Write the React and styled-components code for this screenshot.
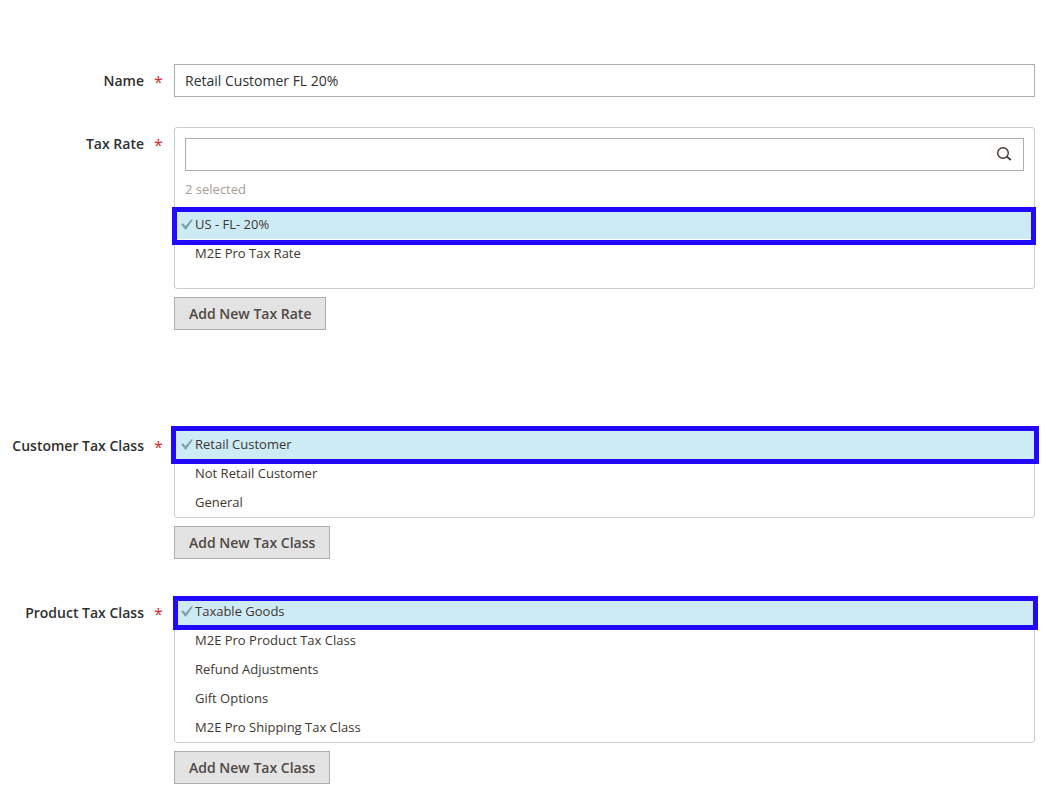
import React, { useState } from "react";
import styled, { createGlobalStyle } from "styled-components";

const GlobalStyle = createGlobalStyle`
  *, *::before, *::after {
    box-sizing: border-box;
  }

  body {
    margin: 0;
    background: #fff;
    color: #303030;
    font-family: "Open Sans", "Noto Sans", sans-serif;
    font-size: 14px;
  }
`;

const customerClasses = ["Retail Customer", "Not Retail Customer", "General"];

const productClasses = [
  "Taxable Goods",
  "M2E Pro Product Tax Class",
  "Refund Adjustments",
  "Gift Options",
  "M2E Pro Shipping Tax Class",
];

const taxRates = ["US - FL- 20%", "M2E Pro Tax Rate"];

const SearchIcon = () => (
  <svg width="16" height="16" viewBox="0 0 16 16" fill="none" stroke="#41362f" aria-hidden="true">
    <circle cx="7" cy="7" r="5.3" strokeWidth="1.4" />
    <path d="M10.8 10.6 L14.8 14" strokeWidth="1.9" />
  </svg>
);

const CheckIcon = () => (
  <svg width="12" height="12" viewBox="0 0 12 12" fill="#7fa4b0" aria-hidden="true">
    <path d="M0.2 5.6 L2.1 4.3 L4.4 7 L10.4 0.2 L11.9 0.8 L5.2 10.4 L4 10.4 Z" />
  </svg>
);

// the blue frame goes round the option at index 0
const OptionList = ({ name, options, frame }) => {
  const [selected, setSelected] = useState([options[0]]);

  const toggle = (option) => {
    setSelected((prev) =>
      prev.includes(option) ? prev.filter((o) => o !== option) : [...prev, option]
    );
  };

  return (
    <List>
      {options.map((option, index) => {
        const checked = selected.includes(option);
        return (
          <Option key={option} $checked={checked}>
            <label>
              <input
                type="checkbox"
                name={name}
                checked={checked}
                onChange={() => toggle(option)}
              />
              <Mark>{checked && <CheckIcon />}</Mark>
              {option}
            </label>
            {index === 0 && <Frame $inset={frame} />}
          </Option>
        );
      })}
    </List>
  );
};

const App = () => {
  const [name, setName] = useState("Retail Customer FL 20%");
  const [search, setSearch] = useState("");

  return (
    <>
      <GlobalStyle />
      <Form onSubmit={(e) => e.preventDefault()}>
        <Field $space={30}>
          <Label as="label" htmlFor="rule-name">
            Name<Required>*</Required>
          </Label>
          <TextInput
            id="rule-name"
            type="text"
            required
            value={name}
            onChange={(e) => setName(e.target.value)}
          />
        </Field>

        <Field $space={99} role="group" aria-labelledby="tax-rate">
          <Label id="tax-rate">
            Tax Rate<Required>*</Required>
          </Label>
          <Control>
            <Panel $tall>
              <SearchBox>
                <TextInput
                  type="text"
                  aria-label="Search tax rates"
                  value={search}
                  onChange={(e) => setSearch(e.target.value)}
                />
                <SearchButton type="button" aria-label="Search">
                  <SearchIcon />
                </SearchButton>
              </SearchBox>
              <Count>2 selected</Count>
              <OptionList name="tax_rate" options={taxRates} frame="-3px -2px -6px -3px" />
            </Panel>
            <AddButton type="button">Add New Tax Rate</AddButton>
          </Control>
        </Field>

        <Field $space={37} role="group" aria-labelledby="customer-class">
          <Label id="customer-class">
            Customer Tax Class<Required>*</Required>
          </Label>
          <Control>
            <Panel>
              <OptionList
                name="tax_customer_class"
                options={customerClasses}
                frame="-4px -5px -5px -4px"
              />
            </Panel>
            <AddButton type="button">Add New Tax Class</AddButton>
          </Control>
        </Field>

        <Field $space={0} role="group" aria-labelledby="product-class">
          <Label id="product-class">
            Product Tax Class<Required>*</Required>
          </Label>
          <Control>
            <Panel>
              <OptionList
                name="tax_product_class"
                options={productClasses}
                frame="-1px -4px -4px -2px"
              />
            </Panel>
            <AddButton type="button">Add New Tax Class</AddButton>
          </Control>
        </Field>
      </Form>
    </>
  );
};

const Form = styled.form`
  padding: 64px 20px 24px 0;
`;

const Field = styled.div`
  display: grid;
  grid-template-columns: 174px minmax(0, 1fr);
  align-items: start;
  margin-bottom: ${({ $space }) => $space}px;
`;

const Label = styled.span`
  display: flex;
  justify-content: flex-end;
  padding-right: 11px;
  font-weight: 600;
  line-height: 33px;
  white-space: nowrap;
`;

const Required = styled.span`
  width: 9px;
  height: 33px;
  margin-left: 10px;
  color: #e22626;
  font-size: 16px;
  font-weight: 400;
  line-height: 36px;
`;

const Control = styled.div`
  display: flex;
  flex-direction: column;
  align-items: stretch;
  gap: 8px;
`;

const TextInput = styled.input`
  width: 100%;
  height: 33px;
  padding: 0 10px;
  border: 1px solid #adadad;
  border-radius: 0;
  background: #fff;
  color: #303030;
  font: inherit;

  &:focus {
    outline: none;
    border-color: #007bdb;
  }
`;

const Panel = styled.div`
  border: 1px solid #ccc;
  border-radius: 3px;
  padding: ${({ $tall }) => ($tall ? "10px 0 20px" : "0")};
`;

const SearchBox = styled.div`
  position: relative;
  margin: 0 10px;
`;

const SearchButton = styled.button`
  position: absolute;
  top: 0;
  right: 0;
  display: flex;
  align-items: center;
  justify-content: center;
  width: 40px;
  height: 32px;
  padding: 0;
  border: 0;
  background: none;
  cursor: pointer;
`;

const Count = styled.p`
  margin: 0;
  padding: 8px 10px 11px;
  color: #a79d95;
  font-size: 13px;
  line-height: 20px;
`;

const List = styled.ul`
  margin: 0;
  padding: 0;
  list-style: none;
`;

const Option = styled.li`
  position: relative;
  background: ${({ $checked }) => ($checked ? "#cdebf5" : "transparent")};
  color: #41362f;
  font-size: 13px;
  line-height: 29px;

  label {
    display: flex;
    align-items: center;
    padding-left: 6px;
    cursor: pointer;
  }

  input {
    position: absolute;
    opacity: 0;
    margin: 0;
  }
`;

const Mark = styled.span`
  display: flex;
  flex-shrink: 0;
  width: 14px;
`;

const Frame = styled.span`
  position: absolute;
  inset: ${({ $inset }) => $inset};
  border: 5px solid #2108ff;
  pointer-events: none;
  z-index: 1;
`;

const AddButton = styled.button`
  align-self: flex-start;
  height: 33px;
  padding: 0 14px;
  border: 1px solid #adadad;
  border-radius: 0;
  background: #e3e3e3;
  color: #514943;
  font: inherit;
  font-weight: 600;
  cursor: pointer;

  &:hover {
    background: #dbdbdb;
  }
`;

export default App;
